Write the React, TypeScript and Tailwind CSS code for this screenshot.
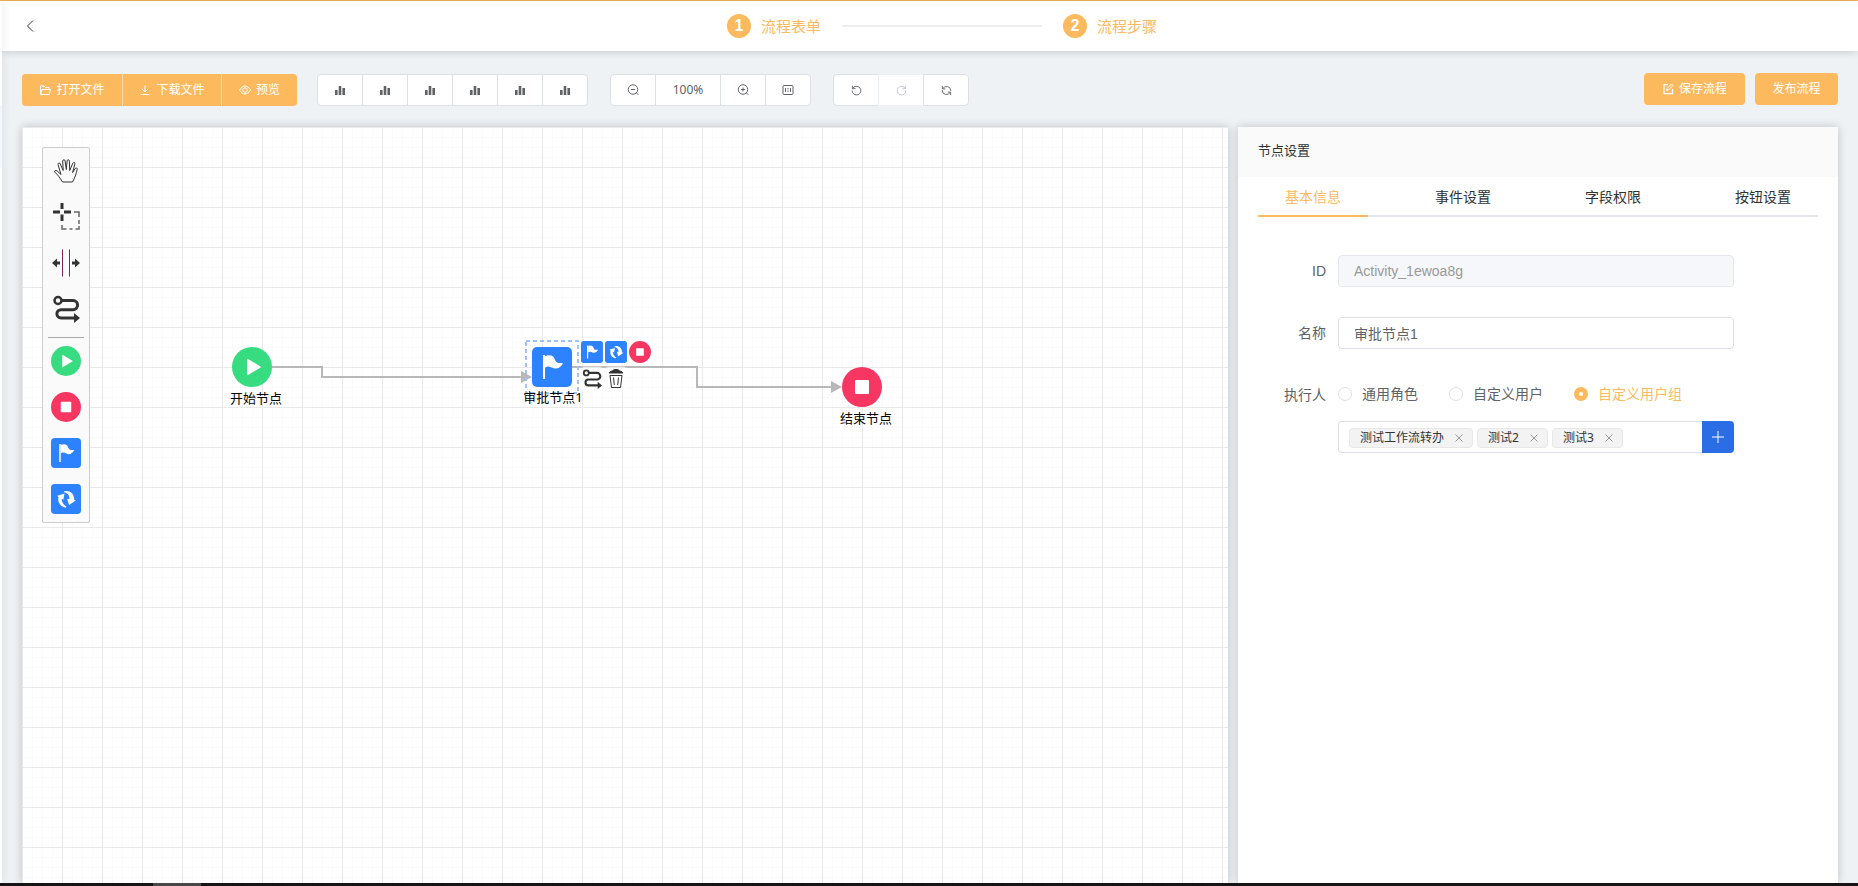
import { useState, type ReactNode } from "react";
import { clsx } from "clsx";

type IconProps = { className?: string };

function LineIcon({ className = "size-3", children }: IconProps & { children: ReactNode }) {
  return (
    <svg viewBox="0 0 24 24" className={className} fill="none" stroke="currentColor" strokeWidth="2" aria-hidden="true">
      {children}
    </svg>
  );
}

const FolderIcon = () => (
  <LineIcon>
    <path d="M3 21V4h7l3 3h7v4M3 21l3-10h17l-3 10z" />
  </LineIcon>
);

const DownloadIcon = () => (
  <LineIcon>
    <path d="M12 3v13M6 10l6 6 6-6M3 21h18" />
  </LineIcon>
);

const EyeIcon = () => (
  <LineIcon>
    <path d="M1 12c3-5 7-8 11-8s8 3 11 8c-3 5-7 8-11 8s-8-3-11-8z" />
    <circle cx="12" cy="12" r="4.5" />
  </LineIcon>
);

const EditIcon = () => (
  <LineIcon>
    <path d="M12 3H4v18h17V12" strokeWidth="2.500" />
    <path d="M9 15l1-4L19 2l3 3-9 9z" />
  </LineIcon>
);

const HistogramIcon = () => (
  <svg viewBox="0 0 10 10" className="size-[10px]" fill="currentColor" aria-hidden="true">
    <path d="M0 5h2.6v5H0zM3.7 1h2.6v9H3.7zM7.4 3H10v7H7.4z" />
  </svg>
);

const ZoomIcon = ({ plus = false }: { plus?: boolean }) => (
  <LineIcon>
    <circle cx="12" cy="11" r="9.5" />
    <path d="M18.500 17.500l4 4M8 11h8" />
    {plus && <path d="M12 7v8" />}
  </LineIcon>
);

const ScaleIcon = () => (
  <LineIcon>
    <rect x="2" y="3" width="20" height="18" rx="2" />
    <path d="M7 8v8M17 8v8M12 8v3M12 13v3" />
  </LineIcon>
);

const UndoIcon = ({ flip = false }: { flip?: boolean }) => (
  <LineIcon className={clsx("size-[11px]", flip && "-scale-x-100")}>
    <path d="M3.500 8A9.500 9.500 0 1 1 2.500 12M3 1.500V8h7" />
  </LineIcon>
);

const RefreshIcon = () => (
  <LineIcon className="size-[11px]">
    <path d="M3.500 8.500A9.500 9.500 0 0 1 21.500 13M3 2v6.500h6.500" />
    <path d="M20.500 15.500A9.500 9.500 0 0 1 2.500 11M21 22v-6.500h-6.500" />
  </LineIcon>
);

const HandIcon = () => (
  <svg viewBox="0 0 24 24" className="size-6" fill="none" stroke="currentColor" strokeLinejoin="round" aria-hidden="true">
    <path d="M8.500 23C6 19 3.500 15.500 .8 13.100c-.8-1.500 1-2.300 2.200-1.200l4 3.600-3-10c-.2-1.800 1.800-2.100 2.300-.5L9.200 11.500 8.700 2c.2-1.700 2.200-1.700 2.400 0L12.300 10.500l.8-8.700c.4-1.600 2.300-1.400 2.300.3L15.700 11.500l3.200-7.500c.8-1.400 2.400-.7 2 .8L18.600 13.500l2.600-4c1-1.200 2.500-.4 2 1-.9 4-2.600 9-4.700 12.500z" />
  </svg>
);

const LassoIcon = () => (
  <svg viewBox="0 0 28 28" className="size-7" fill="none" stroke="currentColor" aria-hidden="true">
    <path d="M1 9h7M12 9h7M10 0v6M10 11.500v6.500" strokeWidth="3" />
    <path d="M22 9h5v5M27 17v4M27 23v3H23.500M20.500 26h-3M14.500 26h-4.500v-4" stroke="#666" strokeWidth="1.500" />
  </svg>
);

const SpaceIcon = () => (
  <svg viewBox="0 0 28 28" className="size-7" fill="currentColor" aria-hidden="true">
    <path d="M0 14l5-4.500v3h3v3H5v3zM28 14l-5-4.500v3h-3v3h3v3z" />
    <path d="M10.500 .5v27M17.500 .5v27" stroke="#8a2452" />
  </svg>
);

const ConnectIcon = ({ className = "size-7" }: IconProps) => (
  <svg viewBox="0 0 28 28" className={className} fill="none" stroke="currentColor" strokeWidth="3" aria-hidden="true">
    <circle cx="6" cy="5.500" r="3.500" strokeWidth="2.500" />
    <path d="M9.500 5.500H21a4.600 4.600 0 0 1 0 9.200H9a4.100 4.100 0 0 0 0 8.200h14" />
    <path d="M22 18l6 5-6 5z" fill="currentColor" stroke="none" />
  </svg>
);

const TrashIcon = () => (
  <svg viewBox="0 0 16 20" className="h-5 w-4" fill="none" stroke="currentColor" aria-hidden="true">
    <path d="M1 4c1-2 4-2 4-2.500S6 .5 8 .5s3 .5 3 1S14 2 15 4z" fill="currentColor" />
    <path d="M2 6.500l1.500 12h9l1.500-12zM5.500 8.500l.8 7.500M10.500 8.500L9.700 16" />
  </svg>
);

// BPMN element glyphs, drawn on a 40 x 40 box
const StartShape = () => (
  <>
    <circle cx="20" cy="20" r="20" fill="#38dc80" />
    <path d="M15 12.500q0-1 1-.5l12.500 7.500q.8.500 0 1L16 28q-1 .5-1-.5z" fill="#fff" />
  </>
);

const EndShape = () => (
  <>
    <circle cx="20" cy="20" r="20" fill="#f73662" />
    <rect x="13" y="13" width="14" height="14" rx="1" fill="#fff" />
  </>
);

const TaskShape = () => (
  <>
    <rect width="40" height="40" rx="5" fill="#2d83ff" />
    <path d="M11 8h2v24h-2z" fill="#fff" />
    <path d="M13 9c6-2 9 0 10 4 2 4 5 3 8 3-2 4-5 6-8.500 5.500C18 20 16 18 13 21z" fill="#fff" />
  </>
);

const SyncShape = () => (
  <>
    <rect width="40" height="40" rx="5" fill="#2d83ff" />
    <path d="M8.500 15.500L18 12.500l-1.500 8.500-2.500-1.500c.5 5 3 8 6.500 10.500l-1 1.500C12 29.500 8.500 24 10 17.500z" fill="#fff" />
    <path d="M17.500 9.500C25 8 31 13 31 20.500l2 1.500-9 6-2.500-8.500 3 .8c.5-5-2.500-8.300-7-9.300z" fill="#fff" />
  </>
);

const Shape = ({ className, children }: IconProps & { children: ReactNode }) => (
  <svg viewBox="0 0 40 40" className={className} aria-hidden="true">
    {children}
  </svg>
);

const paletteItems = [
  { label: "抓手工具", icon: <HandIcon /> },
  { label: "框选工具", icon: <LassoIcon /> },
  { label: "间距工具", icon: <SpaceIcon /> },
  { label: "连线工具", icon: <ConnectIcon /> },
  { label: "开始节点", icon: <Shape className="size-[30px]"><StartShape /></Shape> },
  { label: "结束节点", icon: <Shape className="size-[30px]"><EndShape /></Shape> },
  { label: "审批节点", icon: <Shape className="size-[30px]"><TaskShape /></Shape> },
  { label: "会签节点", icon: <Shape className="size-[30px]"><SyncShape /></Shape> },
];

const contextItems = [
  { label: "追加审批节点", icon: <Shape className="size-[22px]"><TaskShape /></Shape> },
  { label: "追加会签节点", icon: <Shape className="size-[22px]"><SyncShape /></Shape> },
  { label: "追加结束节点", icon: <Shape className="size-[22px]"><EndShape /></Shape> },
  { label: "连线", icon: <ConnectIcon className="size-5" /> },
  { label: "删除", icon: <TrashIcon /> },
];

const aligns = ["左对齐", "水平居中", "右对齐", "上对齐", "垂直居中", "下对齐"];
const tabs = ["基本信息", "事件设置", "字段权限", "按钮设置"];
const executors = ["通用角色", "自定义用户", "自定义用户组"];

function Step({ index, title }: { index: number; title: string }) {
  return (
    <div className="flex items-center gap-[10px] text-[#fdb95e]">
      <span className="flex size-6 items-center justify-center rounded-full bg-[#fdb95e] font-['Liberation_Sans',sans-serif] text-base font-bold text-white">
        {index}
      </span>
      <span className="text-[15px]">{title}</span>
    </div>
  );
}

function ToolButton({ label, width = "w-[46px]", disabled, children }: { label?: string; width?: string; disabled?: boolean; children: ReactNode }) {
  return (
    <button
      type="button"
      aria-label={label}
      disabled={disabled}
      className={clsx(
        "-ml-px flex h-8 items-center justify-center border border-[#dcdfe6] bg-white text-xs text-[#606266] first:ml-0 first:rounded-l last:rounded-r disabled:border-[#ebeef5] disabled:text-[#c0c4cc]",
        width,
      )}
    >
      {children}
    </button>
  );
}

function Toolbar() {
  const primary = "flex h-8 items-center justify-center gap-[5px] bg-[#fdb95e] text-xs text-white";
  return (
    <div className="flex h-[33px] shrink-0 items-end">
      <div className="flex gap-px overflow-hidden rounded bg-[#fedcae]">
        <button type="button" className={clsx(primary, "w-[100px]")}><FolderIcon />打开文件</button>
        <button type="button" className={clsx(primary, "w-[98px]")}><DownloadIcon />下载文件</button>
        <button type="button" className={clsx(primary, "w-[75px]")}><EyeIcon />预览</button>
      </div>
      <div className="ml-5 flex">
        {aligns.map((name) => (
          <ToolButton key={name} label={name}><HistogramIcon /></ToolButton>
        ))}
      </div>
      <div className="ml-[22px] flex">
        <ToolButton label="缩小"><ZoomIcon /></ToolButton>
        <ToolButton width="w-[66px]">100%</ToolButton>
        <ToolButton label="放大"><ZoomIcon plus /></ToolButton>
        <ToolButton label="还原比例"><ScaleIcon /></ToolButton>
      </div>
      <div className="ml-[22px] flex">
        <ToolButton label="撤销"><UndoIcon /></ToolButton>
        <ToolButton label="恢复" disabled><UndoIcon flip /></ToolButton>
        <ToolButton label="重新绘制"><RefreshIcon /></ToolButton>
      </div>
      <div className="ml-auto flex gap-[10px] self-start">
        <button type="button" className={clsx(primary, "w-[101px] rounded")}><EditIcon />保存流程</button>
        <button type="button" className={clsx(primary, "w-[83px] rounded")}>发布流程</button>
      </div>
    </div>
  );
}

function DiagramCanvas() {
  return (
    <section className="relative min-w-0 flex-1 overflow-hidden bg-white bg-[linear-gradient(to_right,#e9e9e9_1px,transparent_1px),linear-gradient(to_bottom,#e9e9e9_1px,transparent_1px),linear-gradient(to_right,#fafafa_1px,transparent_1px),linear-gradient(to_bottom,#fafafa_1px,transparent_1px)] bg-[size:40px_40px,40px_40px,10px_10px,10px_10px]">
      <svg className="absolute inset-0 size-full" fill="none">
        <g stroke="#b8b8b8" strokeWidth="2">
          <path d="M250 240H300V250H500" />
          <path d="M550 240H675V260H810" />
        </g>
        <g fill="#b8b8b8">
          <path d="M499 244l11 6-11 6z" />
          <path d="M809 254l11 6-11 6z" />
        </g>
        <rect x="504" y="214" width="52" height="52" stroke="#9cc3fb" strokeWidth="2" strokeDasharray="4 3" />
        <g transform="translate(210 220)"><StartShape /></g>
        <g transform="translate(510 220)"><TaskShape /></g>
        <g transform="translate(820 240)"><EndShape /></g>
        <g fill="#000" textAnchor="middle" className="text-[13px]">
          <text x="234" y="276">开始节点</text>
          <text x="531" y="275">审批节点1</text>
          <text x="844" y="296">结束节点</text>
        </g>
      </svg>

      <div className="absolute left-[559px] top-[214px] flex w-[72px] flex-wrap gap-x-[2px] gap-y-[5px] text-[#333]">
        {contextItems.map(({ label, icon }) => (
          <button key={label} type="button" aria-label={label} className="flex size-[22px] items-center justify-center rounded bg-white shadow-[0_0_2px_1px_#fefefe]">
            {icon}
          </button>
        ))}
      </div>

      <div className="absolute left-5 top-5 flex w-12 flex-col items-center rounded-[2px] border border-[#ccc] bg-[#fafafa] text-[#333]">
        {paletteItems.map(({ label, icon }, i) => (
          <div key={label} className="flex flex-col items-center">
            {i === 4 && <hr className="mt-[5px] w-9 border-[#aaa]" />}
            <button type="button" aria-label={label} className="flex size-[46px] items-center justify-center">
              {icon}
            </button>
          </div>
        ))}
      </div>
    </section>
  );
}

function SettingsPanel() {
  const [tab, setTab] = useState(tabs[0]);
  const [executor, setExecutor] = useState("自定义用户组");
  const [name, setName] = useState("审批节点1");
  const [groups, setGroups] = useState(["测试工作流转办", "测试2", "测试3"]);

  return (
    <aside className="w-[600px] shrink-0 bg-white shadow-[0_0_9px_rgba(0,0,0,0.2)]">
      <h2 className="flex h-[50px] items-center bg-[#fafafa] px-5 pb-[2px] text-[13px] text-[#303133]">节点设置</h2>

      <div role="tablist" className="mx-5 flex justify-between shadow-[inset_0_-2px_0_#e4e7ed]">
        {tabs.map((item) => (
          <button
            key={item}
            type="button"
            role="tab"
            aria-selected={item === tab}
            onClick={() => setTab(item)}
            className={clsx(
              "h-10 w-[110px] border-b-2 pt-[2px] text-sm",
              item === tab ? "border-[#fdb95e] text-[#fdb95e]" : "border-transparent text-[#303133]",
            )}
          >
            {item}
          </button>
        ))}
      </div>

      <form className="mt-[38px] flex flex-col pl-5 pr-[104px] text-sm text-[#606266]">
        <div className="flex items-center gap-3">
          <label htmlFor="node-id" className="w-[68px] text-right font-['Liberation_Sans',sans-serif]">ID</label>
          <input id="node-id" disabled value="Activity_1ewoa8g" className="h-8 min-w-0 flex-1 rounded border border-[#e4e7ed] bg-[#f5f7fa] px-[15px] font-['Liberation_Sans',sans-serif] text-[#999]" />
        </div>

        <div className="mt-[30px] flex items-center gap-3">
          <label htmlFor="node-name" className="w-[68px] text-right">名称</label>
          <input
            id="node-name"
            value={name}
            onChange={(e) => setName(e.target.value)}
            className="h-8 min-w-0 flex-1 rounded border border-[#dcdfe6] bg-white px-[15px] font-['Liberation_Sans','Noto_Sans_CJK_SC',sans-serif]"
          />
        </div>

        <div role="radiogroup" aria-labelledby="executor-label" className="mt-[30px] flex h-8 items-center gap-3">
          <span id="executor-label" className="w-[68px] text-right">执行人</span>
          <div className="flex gap-[31px] pb-[2px]">
            {executors.map((item) => (
              <label key={item} className={clsx("flex items-center gap-[10px]", item === executor && "text-[#fdb95e]")}>
                <input
                  type="radio"
                  name="executor"
                  checked={item === executor}
                  onChange={() => setExecutor(item)}
                  className="size-[14px] appearance-none rounded-full border border-[#dcdfe6] bg-white checked:border-[5px] checked:border-[#fdb95e]"
                />
                {item}
              </label>
            ))}
          </div>
        </div>

        <div className="ml-20 mt-[10px] flex h-8">
          <div className="flex min-w-0 flex-1 items-center gap-1 rounded-l border border-r-0 border-[#dcdfe6] px-[10px] pt-[2px]">
            {groups.map((group) => (
              <span key={group} className="flex h-5 items-center gap-[11px] rounded border border-[#e8e8e8] bg-[#f3f3f3] pl-[10px] pr-[9px] text-xs text-[#333]">
                {group}
                <button type="button" aria-label={`移除${group}`} onClick={() => setGroups(groups.filter((g) => g !== group))} className="text-[#999]">
                  <svg viewBox="0 0 8 8" className="size-2" stroke="currentColor" aria-hidden="true">
                    <path d="M.5 .5l7 7M7.500 .5l-7 7" />
                  </svg>
                </button>
              </span>
            ))}
          </div>
          <button type="button" aria-label="添加用户组" className="flex w-8 items-center justify-center rounded-r bg-[#2a6de5] text-white">
            <svg viewBox="0 0 12 12" className="size-3" stroke="currentColor" aria-hidden="true">
              <path d="M6 0v12M0 6h12" />
            </svg>
          </button>
        </div>
      </form>
    </aside>
  );
}

export default function App() {
  return (
    <div className="flex h-screen flex-col border-t border-[#fdb95e] bg-white font-['Noto_Sans','Noto_Sans_CJK_SC',sans-serif]">
      <div className="flex min-h-0 flex-1">
        <div className="z-20 w-[2px] shrink-0 bg-white pt-[104px] shadow-[0_0_8px_rgba(0,0,0,0.2)]">
          <div className="h-[63px] bg-[#f0f7ff]" />
        </div>
        <div className="flex min-w-0 flex-1 flex-col bg-[#eef2f5]">
          <header className="z-10 grid h-[50px] shrink-0 grid-cols-[24px_1fr] items-center bg-white px-[18px] shadow-[0_0_9px_rgba(0,0,0,0.2)]">
            <button type="button" aria-label="返回" className="flex size-6 items-center pl-[6px] text-[#303133]">
              <svg viewBox="0 0 8 12" className="h-3 w-2" fill="none" stroke="currentColor" aria-hidden="true">
                <path d="M7 .5L1.500 6 7 11.500" />
              </svg>
            </button>
            <nav className="flex items-center justify-center gap-[21px]">
              <Step index={1} title="流程表单" />
              <div className="h-[2px] w-[200px] bg-[#ededed]" />
              <Step index={2} title="流程步骤" />
            </nav>
          </header>

          <main className="flex min-h-0 flex-1 flex-col gap-[21px] px-5 pt-[22px]">
            <Toolbar />
            <div className="flex min-h-0 flex-1 gap-[10px]">
              <div className="flex min-w-0 flex-1 shadow-[0_0_9px_rgba(0,0,0,0.2)]">
                <DiagramCanvas />
              </div>
              <SettingsPanel />
            </div>
          </main>
        </div>
      </div>
      <footer className="h-[3px] shrink-0 bg-[#161415] pl-[153px]">
        <div className="h-full w-12 bg-[#484647]" />
      </footer>
    </div>
  );
}
